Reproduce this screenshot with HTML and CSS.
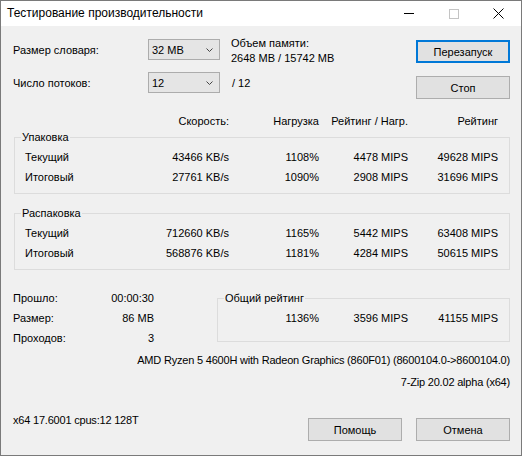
FILE: index.html
```html
<!DOCTYPE html>
<html lang="ru">
<head>
    <meta charset="UTF-8">
    <title>Тестирование производительности</title>
    <link rel="stylesheet" href="styles.css">
</head>
<body>
    <div class="window">
        <div class="titlebar">
            <span class="title">Тестирование производительности</span>
            <div class="caption-buttons">
                <span class="caption-btn">
                    <svg width="10" height="1" viewBox="0 0 10 1"><rect width="10" height="1" fill="#000"/></svg>
                </span>
                <span class="caption-btn">
                    <svg width="10" height="10" viewBox="0 0 10 10"><rect x="0.5" y="0.5" width="9" height="9" fill="none" stroke="#c4c4c4"/></svg>
                </span>
                <span class="caption-btn">
                    <svg width="11" height="11" viewBox="0 0 11 11"><path d="M0.5 0.5 L10.5 10.5 M10.5 0.5 L0.5 10.5" stroke="#000" stroke-width="1"/></svg>
                </span>
            </div>
        </div>

        <div class="client">
            <div class="top">
                <div class="settings">
                    <span class="label">Размер словаря:</span>
                    <div class="combo">
                        <span>32 MB</span>
                        <svg width="7" height="4" viewBox="0 0 7 4"><polyline points="0.5,0.5 3.5,3.5 6.5,0.5" fill="none" stroke="#444"/></svg>
                    </div>
                    <div class="mem">Объем памяти:<br>2648 MB / 15742 MB</div>

                    <span class="label">Число потоков:</span>
                    <div class="combo">
                        <span>12</span>
                        <svg width="7" height="4" viewBox="0 0 7 4"><polyline points="0.5,0.5 3.5,3.5 6.5,0.5" fill="none" stroke="#444"/></svg>
                    </div>
                    <div class="threads">/ 12</div>
                </div>
                <div class="top-buttons">
                    <button class="btn btn-default">Перезапуск</button>
                    <button class="btn">Стоп</button>
                </div>
            </div>

            <div class="bench">
                <div class="bench-head">
                    <div class="row head">
                        <span></span>
                        <span class="num">Скорость:</span>
                        <span class="num">Нагрузка</span>
                        <span class="num">Рейтинг / Нагр.</span>
                        <span class="num">Рейтинг</span>
                    </div>
                </div>

                <fieldset class="group">
                    <legend>Упаковка</legend>
                    <div class="row">
                        <span>Текущий</span>
                        <span class="num">43466 KB/s</span>
                        <span class="num">1108%</span>
                        <span class="num">4478 MIPS</span>
                        <span class="num">49628 MIPS</span>
                    </div>
                    <div class="row">
                        <span>Итоговый</span>
                        <span class="num">27761 KB/s</span>
                        <span class="num">1090%</span>
                        <span class="num">2908 MIPS</span>
                        <span class="num">31696 MIPS</span>
                    </div>
                </fieldset>

                <fieldset class="group group-gap">
                    <legend>Распаковка</legend>
                    <div class="row">
                        <span>Текущий</span>
                        <span class="num">712660 KB/s</span>
                        <span class="num">1165%</span>
                        <span class="num">5442 MIPS</span>
                        <span class="num">63408 MIPS</span>
                    </div>
                    <div class="row">
                        <span>Итоговый</span>
                        <span class="num">568876 KB/s</span>
                        <span class="num">1181%</span>
                        <span class="num">4284 MIPS</span>
                        <span class="num">50615 MIPS</span>
                    </div>
                </fieldset>
            </div>

            <div class="summary">
                <div class="stats">
                    <span>Прошло:</span><span class="num">00:00:30</span>
                    <span>Размер:</span><span class="num">86 MB</span>
                    <span>Проходов:</span><span class="num">3</span>
                </div>
                <fieldset class="group total">
                    <legend>Общий рейтинг</legend>
                    <div class="total-row">
                        <span class="num">1136%</span>
                        <span class="num">3596 MIPS</span>
                        <span class="num">41155 MIPS</span>
                    </div>
                </fieldset>
            </div>

            <div class="cpu">AMD Ryzen 5 4600H with Radeon Graphics (860F01) (8600104.0-&gt;8600104.0)</div>
            <div class="version">7-Zip 20.02 alpha (x64)</div>

            <div class="footer">
                <span class="sysinfo">x64 17.6001 cpus:12 128T</span>
                <button class="btn">Помощь</button>
                <button class="btn">Отмена</button>
            </div>
        </div>
    </div>
</body>
</html>
```

FILE: styles.css
```css
body {
    margin: 0;
    padding: 0;
    background-color: #ffffff;
    font-family: "Liberation Sans", Arial, sans-serif;
    font-size: 11px;
    color: #000000;
}
.window {
    box-sizing: border-box;
    width: 522px;
    height: 456px;
    border: 1px solid #7a7a7a;
    display: flex;
    flex-direction: column;
}
.titlebar {
    height: 25px;
    background-color: #ffffff;
    display: flex;
    align-items: center;
}
.title {
    padding-left: 6px;
    font-size: 12px;
    line-height: 25px;
}
.caption-buttons {
    margin-left: auto;
    display: flex;
}
.caption-btn {
    width: 45px;
    height: 25px;
    display: flex;
    align-items: center;
    justify-content: center;
}
.client {
    flex: 1;
    background-color: #f0f0f0;
    padding-right: 11px;
}

/* верхняя часть */
.top {
    display: flex;
    align-items: flex-start;
    padding-top: 13px;
    padding-left: 12px;
}
.settings {
    display: grid;
    grid-template-columns: 135px 72px auto;
    grid-auto-rows: 21px;
    row-gap: 12px;
    align-items: center;
}
.combo {
    box-sizing: border-box;
    height: 21px;
    border: 1px solid #acacac;
    background-color: #e5e5e5;
    display: flex;
    align-items: center;
    justify-content: space-between;
    padding: 0 6px 0 3px;
}
.mem {
    align-self: start;
    margin-top: -3px;
    margin-left: 11px;
    line-height: 15px;
}
.threads {
    margin-left: 12px;
}
.top-buttons {
    margin-left: auto;
    margin-top: 1px;
    display: flex;
    flex-direction: column;
    gap: 13px;
}
.btn {
    box-sizing: border-box;
    width: 94px;
    height: 23px;
    border: 1px solid #adadad;
    background-color: #e1e1e1;
    font-family: inherit;
    font-size: 11px;
    color: #000000;
    padding: 0;
    margin: 0;
}
.btn-default {
    border: 2px solid #0078d7;
}

/* таблица */
.bench {
    margin-left: 13px;
    margin-top: 16px;
    width: 496px;
}
.bench-head {
    padding-left: 11px;
}
.row {
    display: grid;
    grid-template-columns: 100px 104px 90px 89px 90px;
    line-height: 20px;
}
.row.head {
    line-height: 13px;
}
.num {
    text-align: right;
}
.group {
    margin: 0;
    min-width: 0;
    border: 1px solid #dcdcdc;
    padding: 3px 11px 6px 10px;
}
.group legend {
    padding: 0 1px;
    margin-left: -4px;
    line-height: 13px;
}
.bench > .group:first-of-type {
    margin-top: 3px;
}
.group-gap {
    margin-top: 13px;
}

/* итог */
.summary {
    display: flex;
    align-items: flex-start;
    margin-top: 18px;
    padding-left: 12px;
}
.stats {
    display: grid;
    grid-template-columns: 90px 51px;
    grid-auto-rows: 20px;
    align-items: center;
}
.group.total {
    margin-left: 63px;
    margin-top: 4px;
    width: 293px;
    box-sizing: border-box;
    padding-bottom: 13px;
}
.total-row {
    display: grid;
    grid-template-columns: 91px 89px 90px;
    line-height: 20px;
}
.cpu {
    margin-top: 6px;
    text-align: right;
    line-height: 13px;
    letter-spacing: -0.2px;
}
.version {
    margin-top: 9px;
    text-align: right;
    line-height: 13px;
    letter-spacing: -0.2px;
}
.footer {
    display: flex;
    align-items: flex-start;
    margin-top: 25px;
    padding-left: 12px;
    gap: 14px;
}
.sysinfo {
    flex: 1;
    line-height: 13px;
    letter-spacing: -0.2px;
}
.footer .btn {
    margin-top: 4px;
}
```
